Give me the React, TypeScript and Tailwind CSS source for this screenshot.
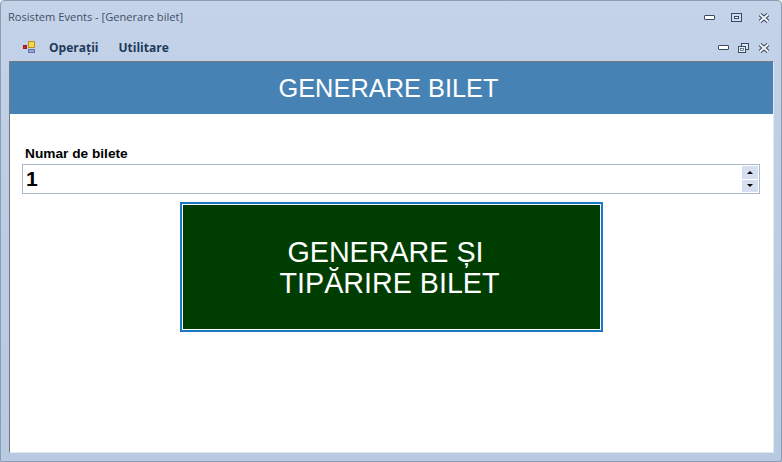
function MinIcon() {
  return <span className="block h-[5px] w-[11px] rounded-[1px] border border-[#3a4a63] bg-white" />;
}

function MaxIcon() {
  return (
    <span className="flex h-[9px] w-[11px] items-center justify-center border border-[#3a4a63] bg-[#cfdcee]">
      <span className="block h-[3px] w-[5px] border border-[#3a4a63] bg-white" />
    </span>
  );
}

function RestoreIcon() {
  return (
    <svg width="11" height="10" viewBox="0 0 11 10">
      <rect x="3.5" y="0.5" width="7" height="6" fill="#dbe5f3" stroke="#3a4a63" />
      <rect x="0.5" y="3.5" width="7" height="6" fill="#eef3fa" stroke="#3a4a63" />
      <rect x="2.5" y="5.5" width="3" height="2" fill="white" stroke="#3a4a63" strokeWidth="0.7" />
    </svg>
  );
}

function CloseIcon() {
  return (
    <svg width="12" height="10" viewBox="0 0 12 10">
      <path d="M2 1.5 L10 8.5 M10 1.5 L2 8.5" stroke="#3a4a63" strokeWidth="4" />
      <path d="M2 1.5 L10 8.5 M10 1.5 L2 8.5" stroke="#f2f5fa" strokeWidth="2" />
    </svg>
  );
}

function AppIcon() {
  return (
    <svg width="13" height="13" viewBox="0 0 13 13">
      <rect x="5.5" y="0.5" width="6" height="6" fill="#f8d84a" stroke="#b8902a" />
      <rect x="0.5" y="4.5" width="3" height="3" fill="#d8261c" stroke="#9c1c14" />
      <rect x="5.5" y="8.5" width="6" height="3" fill="#9aa8d8" stroke="#6272a8" />
    </svg>
  );
}

export default function App() {
  return (
    <div className="flex h-[462px] w-[782px] flex-col overflow-hidden rounded-t-[4px] border border-[#8c9cb2] bg-gradient-to-b from-[#c4d3e8] via-[#bbcce4] to-[#b8cae2] font-['Open_Sans',sans-serif]">
      {/* title bar */}
      <div className="flex h-[33px] shrink-0 items-center justify-between pl-[7px] pr-[11px]">
        <span className="text-[11.1px] text-[#3f4f68]">Rosistem Events - [Generare bilet]</span>
        <div className="flex items-center gap-[16px]">
          <MinIcon />
          <MaxIcon />
          <CloseIcon />
        </div>
      </div>

      {/* menu bar */}
      <div className="flex h-[27px] shrink-0 items-center justify-between pl-[22px] pr-[11px]">
        <div className="flex items-center">
          <AppIcon />
          <span className="ml-[13px] text-[12px] font-bold text-[#1e395b]">Operații</span>
          <span className="ml-[20px] text-[12px] font-bold text-[#1e395b]">Utilitare</span>
        </div>
        <div className="flex items-center gap-[9px]">
          <MinIcon />
          <RestoreIcon />
          <CloseIcon />
        </div>
      </div>

      {/* mdi child */}
      <div className="mr-[7px] mb-[8px] ml-[8px] flex min-h-0 flex-1 flex-col border border-t-[#77787a] border-r-[#dfe9f0] border-b-[#dfe9f0] border-l-[#77787a] bg-white">
        <div className="flex h-[52px] shrink-0 items-center justify-center bg-[#4682b4] pr-[6px] font-['Liberation_Sans',sans-serif] text-[25.4px] text-white">
          GENERARE BILET
        </div>

        <div className="flex flex-col pt-[32px] pr-[13px] pl-[12px] font-['Liberation_Sans',sans-serif]">
          <label className="pl-[3px] text-[13.7px] leading-[15px] font-bold text-black">Numar de bilete</label>
          <div className="mt-[3px] flex h-[30px] items-center justify-between border border-[#abb8cb] pr-[1px] pl-[3px]">
            <span className="text-[21px] font-bold text-black">1</span>
            <div className="flex h-[26px] w-[16px] flex-col gap-px">
              <div className="flex flex-1 items-center justify-center bg-[#d5dff0]">
                <span className="h-0 w-0 border-x-[3px] border-b-[3px] border-x-transparent border-b-black" />
              </div>
              <div className="flex flex-1 items-center justify-center bg-[#d5dff0]">
                <span className="h-0 w-0 border-x-[3px] border-t-[3px] border-x-transparent border-t-black" />
              </div>
            </div>
          </div>

          <button className="mt-[8px] flex h-[130px] w-[423px] flex-col items-center justify-center self-center border-2 border-[#1b78c4] bg-[#003d00] pt-[2px] pr-[3px] text-[28.7px] leading-[31px] text-white outline outline-1 -outline-offset-3 outline-white">
            <span className="pr-[8px]">GENERARE ȘI</span>
            <span>TIPĂRIRE BILET</span>
          </button>
        </div>
      </div>
    </div>
  );
}
